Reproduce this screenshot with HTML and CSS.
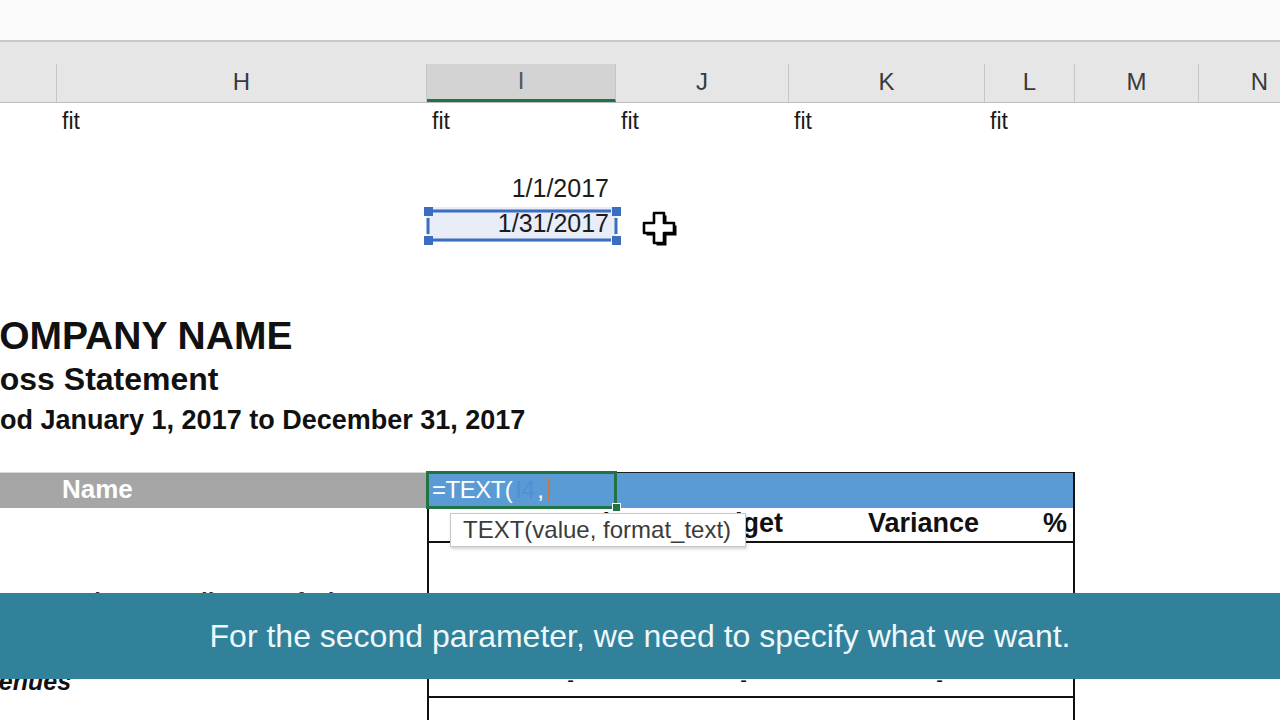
FILE: index.html
```html
<!DOCTYPE html>
<html lang="en">
<head>
    <meta charset="UTF-8">
    <title>Income Statement - TEXT function</title>
    <link rel="stylesheet" href="styles.css">
</head>
<body>

<div class="screen">
    <div class="topbar"></div>

    <!-- column letters -->
    <div class="row colhead">
        <div class="col"></div>
        <div class="col">H</div>
        <div class="col active">I</div>
        <div class="col">J</div>
        <div class="col">K</div>
        <div class="col">L</div>
        <div class="col">M</div>
        <div class="col">N</div>
    </div>

    <div class="row r-fit">
        <div></div>
        <div class="cell">fit</div>
        <div class="cell">fit</div>
        <div class="cell">fit</div>
        <div class="cell">fit</div>
        <div class="cell">fit</div>
        <div></div><div></div>
    </div>

    <div class="row r-empty1"></div>

    <div class="row r-date1">
        <div></div><div></div>
        <div class="cell num">1/1/2017</div>
    </div>
    <div class="row r-date2">
        <div></div><div></div>
        <div class="cell num selected">
            1/31/2017
            <svg class="sel-frame" width="200" height="40" viewBox="0 0 200 40">
                <g stroke="#3b6dc0" stroke-width="3" fill="none">
                    <line x1="10" y1="6" x2="188" y2="6"/>
                    <line x1="10" y1="35" x2="188" y2="35"/>
                    <line x1="5" y1="13" x2="5" y2="29"/>
                    <line x1="193" y1="13" x2="193" y2="29"/>
                </g>
                <g fill="#3b6dc0">
                    <rect x="1" y="2" width="9" height="9"/>
                    <rect x="189" y="2" width="9" height="9"/>
                    <rect x="1" y="31" width="9" height="9"/>
                    <rect x="189" y="31" width="9" height="9"/>
                </g>
            </svg>
        </div>
    </div>

    <div class="row r-empty2"></div>

    <div class="row r-title"><div class="span"><span class="company">COMPANY NAME</span></div></div>
    <div class="row r-sub"><div class="span"><span class="statement">Profit and Loss Statement</span></div></div>
    <div class="row r-period"><div class="span"><span class="period">For the Period January 1, 2017 to December 31, 2017</span></div></div>

    <div class="row r-empty3"></div>

    <!-- table header band -->
    <div class="row r-band">
        <div class="gray"></div>
        <div class="gray cell name">Name</div>
        <div class="blue edit">
            <span class="formula">=TEXT(<span class="ref">I4</span>,</span><span class="caret"></span>
            <span class="fill-handle"></span>
            <div class="tip">TEXT(value, format_text)</div>
        </div>
        <div class="blue"></div>
        <div class="blue"></div>
        <div class="blue b-right"></div>
        <div></div><div></div>
    </div>

    <div class="row r-head">
        <div></div><div></div>
        <div class="cell hd b-left b-bottom">Actual</div>
        <div class="cell hd b-bottom">Budget</div>
        <div class="cell hd b-bottom">Variance</div>
        <div class="cell hd b-bottom b-right">%</div>
    </div>

    <div class="row r-empty4">
        <div></div><div></div>
        <div class="b-left"></div><div></div><div></div>
        <div class="b-right"></div>
    </div>

    <div class="row r-sales">
        <div></div>
        <div class="cell line-item">Sales - Retail - Net of Discounts</div>
        <div class="b-left"></div><div></div><div></div>
        <div class="b-right"></div>
    </div>

    <div class="row r-empty5">
        <div></div><div></div>
        <div class="b-left"></div><div></div><div></div>
        <div class="b-right"></div>
    </div>

    <div class="row r-rev">
        <div class="cell rev"><span>Revenues</span></div>
        <div></div>
        <div class="cell dash b-left b-bottom">-</div>
        <div class="cell dash b-bottom">-</div>
        <div class="cell dash b-bottom">-</div>
        <div class="b-bottom b-right"></div>
    </div>

    <div class="row r-last">
        <div></div><div></div>
        <div class="b-left"></div><div></div><div></div>
        <div class="b-right"></div>
    </div>

    <!-- mouse pointer -->
    <svg class="pointer" width="36" height="36" viewBox="0 0 36 36">
        <path d="M13 3h10v10h10v10h-10v10h-10v-10h-10v-10h10z" fill="#000" transform="translate(1.5 1.5)"/>
        <path d="M12 2h10v10h10v10h-10v10h-10v-10h-10v-10h10z" fill="#fff" stroke="#000" stroke-width="2.6" stroke-linejoin="round"/>
    </svg>

    <!-- video caption -->
    <div class="caption">For the second parameter, we need to specify what we want.</div>
</div>

</body>
</html>
```

FILE: styles.css
```css
html, body {
    margin: 0;
    padding: 0;
    background: #fff;
}

.screen {
    position: relative;
    width: 1280px;
    height: 720px;
    overflow: hidden;
    font-family: "Liberation Sans", Arial, sans-serif;
    color: #111;
}

.topbar {
    height: 40px;
    background: #fafafa;
    border-bottom: 2px solid #c9c9c9;
}

.row {
    display: grid;
    grid-template-columns: 57px 370px 189px 173px 196px 90px 124px 122px;
}

.cell {
    display: flex;
    align-items: center;
    padding: 0 5px;
    white-space: nowrap;
    box-sizing: border-box;
}

/* column letters */
.colhead {
    height: 60px;
    background: #e6e6e6;
    border-bottom: 1px solid #bdbdbd;
    align-items: end;
}

.col {
    height: 38px;
    display: flex;
    align-items: center;
    justify-content: center;
    padding-bottom: 2px;
    border-right: 1px solid #c6c6c6;
    font-size: 24px;
    color: #3a3a3a;
    box-sizing: border-box;
}

.col.active {
    background: #d3d3d3;
    border-bottom: 3px solid #217346;
    color: #555;
}

/* rows */
.r-fit { height: 37px; font-size: 23px; color: #1a1a1a; }
.r-fit .cell { padding-left: 5px; }
.r-empty1 { height: 33px; }
.r-date1 { height: 34px; }
.r-date2 { height: 35px; }
.r-empty2 { height: 75px; }
.r-title { height: 42px; }
.r-sub { height: 43px; }
.r-period { height: 38px; }
.r-empty3 { height: 32px; }
.r-band { height: 36px; }
.r-head { height: 34px; }
.r-empty4 { height: 38px; }
.r-sales { height: 35px; }
.r-empty5 { height: 50px; }
.r-rev { height: 33px; }
.r-last { height: 60px; }

.num {
    justify-content: flex-end;
    padding-right: 7px;
    padding-bottom: 3px;
    font-size: 25px;
    color: #1c1c1c;
}

.selected {
    position: relative;
    background: #e8edf8;
}

.sel-frame {
    position: absolute;
    left: -4px;
    top: -2px;
}

/* title block */
.span {
    grid-column: 1 / -1;
    display: flex;
    align-items: center;
    white-space: nowrap;
    font-weight: bold;
    color: #111;
}

.company {
    font-size: 39px;
    margin-left: -29px;
    margin-top: -5px;
}

.statement {
    font-size: 32px;
    margin-left: -178px;
    margin-top: -2px;
}

.period {
    font-size: 27px;
    margin-left: -150px;
    margin-top: -2px;
}

/* table */
.gray { background: #a6a6a6; border-top: 1px solid #d8d8d8; }
.blue { background: #5b9bd5; border-top: 1px solid #1e1e1e; box-sizing: border-box; }

.name {
    color: #fff;
    font-weight: bold;
    font-size: 26px;
    padding-bottom: 2px;
}

.edit {
    position: relative;
    display: flex;
    align-items: center;
    padding-left: 5px;
    padding-bottom: 2px;
    outline: 3px solid #217346;
    outline-offset: -2px;
    font-size: 24px;
    color: #fff;
}

.formula { letter-spacing: -0.5px; }
.formula .ref { color: #4f8fd6; padding: 0 3px; }

.caret {
    display: inline-block;
    width: 2px;
    height: 23px;
    margin-left: 4px;
    background: #c8764e;
}

.fill-handle {
    position: absolute;
    right: -5px;
    bottom: -4px;
    width: 7px;
    height: 7px;
    background: #217346;
    border: 1px solid #fff;
}

.tip {
    position: absolute;
    left: 23px;
    top: 40px;
    height: 32px;
    padding: 0 14px 0 12px;
    display: flex;
    align-items: center;
    background: #fff;
    border: 1px solid #c8c8c8;
    box-shadow: 1px 2px 3px rgba(0, 0, 0, 0.18);
    font-size: 24px;
    color: #3c3c3c;
    white-space: nowrap;
    z-index: 2;
}

.hd {
    justify-content: flex-end;
    font-weight: bold;
    font-size: 27px;
    padding-right: 6px;
    padding-bottom: 2px;
}

.b-left { border-left: 2px solid #111; }
.b-right { border-right: 2px solid #111; }
.b-bottom { border-bottom: 2px solid #111; }

.line-item {
    padding-left: 8px;
    padding-top: 8px;
    font-weight: bold;
    font-size: 24px;
    color: #333;
    align-items: flex-start;
}

.rev {
    overflow: visible;
    padding: 0;
    font-weight: bold;
    font-style: italic;
    font-size: 25px;
}

.rev span { margin-left: -47px; }

.dash {
    justify-content: flex-end;
    padding-right: 42px;
    font-size: 20px;
}

/* overlays */
.pointer {
    position: absolute;
    left: 642px;
    top: 211px;
}

.caption {
    position: absolute;
    left: 0;
    top: 593px;
    width: 1280px;
    height: 86px;
    display: flex;
    align-items: center;
    justify-content: center;
    background: #31819a;
    color: #eef7fa;
    font-size: 32px;
    z-index: 3;
}
```
